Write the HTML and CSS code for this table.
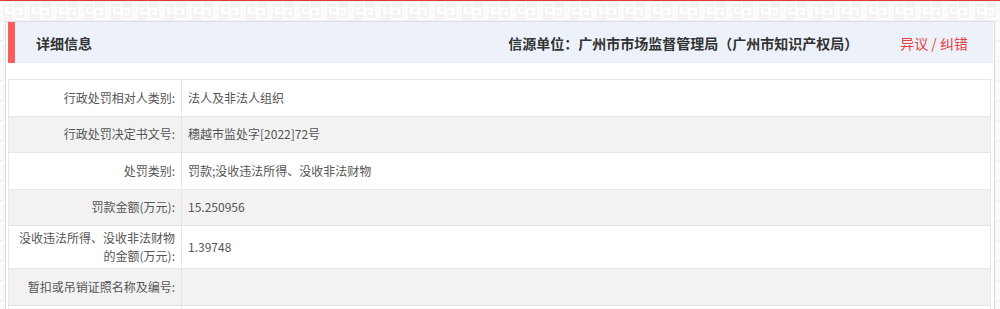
FILE: index.html
```html
<!DOCTYPE html>
<html lang="zh-CN">
<head>
<meta charset="utf-8">
<title>详细信息</title>
<link rel="stylesheet" href="styles.css">
</head>
<body>
<div class="top-line"></div>
<div class="page">
  <section class="panel">
    <header class="panel-head">
      <h2 class="panel-title">详细信息</h2>
      <div class="head-right">
        <span class="source">信源单位：广州市市场监督管理局（广州市知识产权局）</span>
        <a class="report" href="#">异议 / 纠错</a>
      </div>
    </header>
    <div class="info-table">
      <div class="row"><div class="label">行政处罚相对人类别:</div><div class="value">法人及非法人组织</div></div>
      <div class="row alt"><div class="label">行政处罚决定书文号:</div><div class="value">穗越市监处字[2022]72号</div></div>
      <div class="row"><div class="label">处罚类别:</div><div class="value">罚款;没收违法所得、没收非法财物</div></div>
      <div class="row alt"><div class="label">罚款金额(万元):</div><div class="value">15.250956</div></div>
      <div class="row"><div class="label">没收违法所得、没收非法财物的金额(万元):</div><div class="value">1.39748</div></div>
      <div class="row alt"><div class="label">暂扣或吊销证照名称及编号:</div><div class="value"></div></div>
      <div class="row"><div class="label"></div><div class="value"></div></div>
    </div>
  </section>
</div>
</body>
</html>
```

FILE: styles.css
```css
html, body {
  margin: 0;
  padding: 0;
}
body {
  font-family: "Noto Sans CJK SC", "Microsoft YaHei", sans-serif;
  background-color: #f4f4f4;
  background-image: url("data:image/svg+xml;utf8,<svg xmlns='http://www.w3.org/2000/svg' width='27' height='20'><g fill='none' stroke='%23ffffff' stroke-width='2'><path d='M1.5 19V2H13V12H6V7H9.5'/><path d='M25.5 1V18H14V8H21V13H17.5'/></g></svg>");
  background-repeat: repeat;
  background-position: 0 1px;
  height: 309px;
  overflow: hidden;
}
.top-line {
  height: 1px;
  background: #e53935;
}
.page {
  padding: 20px 5px 0 5px;
}
.panel {
  background: #fff;
  border: 1px solid #dddddd;
  border-bottom: none;
  padding: 0 1px 0 2px;
  height: 300px;
}
.panel-head {
  display: flex;
  align-items: center;
  justify-content: space-between;
  height: 41px;
  background: #edf2fa;
  border-left: 7px solid #ff5c5c;
  padding: 0 25px 0 21px;
}
.panel-title {
  margin: 0;
  font-size: 14px;
  font-weight: bold;
  color: #333;
}
.head-right {
  display: flex;
  align-items: center;
  gap: 42px;
}
.source {
  font-size: 14px;
  font-weight: bold;
  color: #333;
}
.report {
  font-size: 14px;
  color: #e53e3e;
  text-decoration: none;
}
.info-table {
  margin: 16px 2px 0 0;
  border: 1px solid #e8e8e8;
  border-bottom: none;
}
.row {
  display: grid;
  grid-template-columns: 173px 1fr;
  min-height: 35.5px;
  border-bottom: 1px solid #e6e6e6;
  background: #fff;
}
.row.alt {
  background: #f2f2f2;
}
.label,
.value {
  display: flex;
  align-items: center;
  font-size: 12px;
  line-height: 18px;
  color: #555;
  padding: 3px 0;
}
.label {
  justify-content: flex-end;
  text-align: right;
  padding-right: 6px;
  padding-left: 4px;
  border-right: 1px solid #e6e6e6;
}
.value {
  padding-left: 6px;
}
```
